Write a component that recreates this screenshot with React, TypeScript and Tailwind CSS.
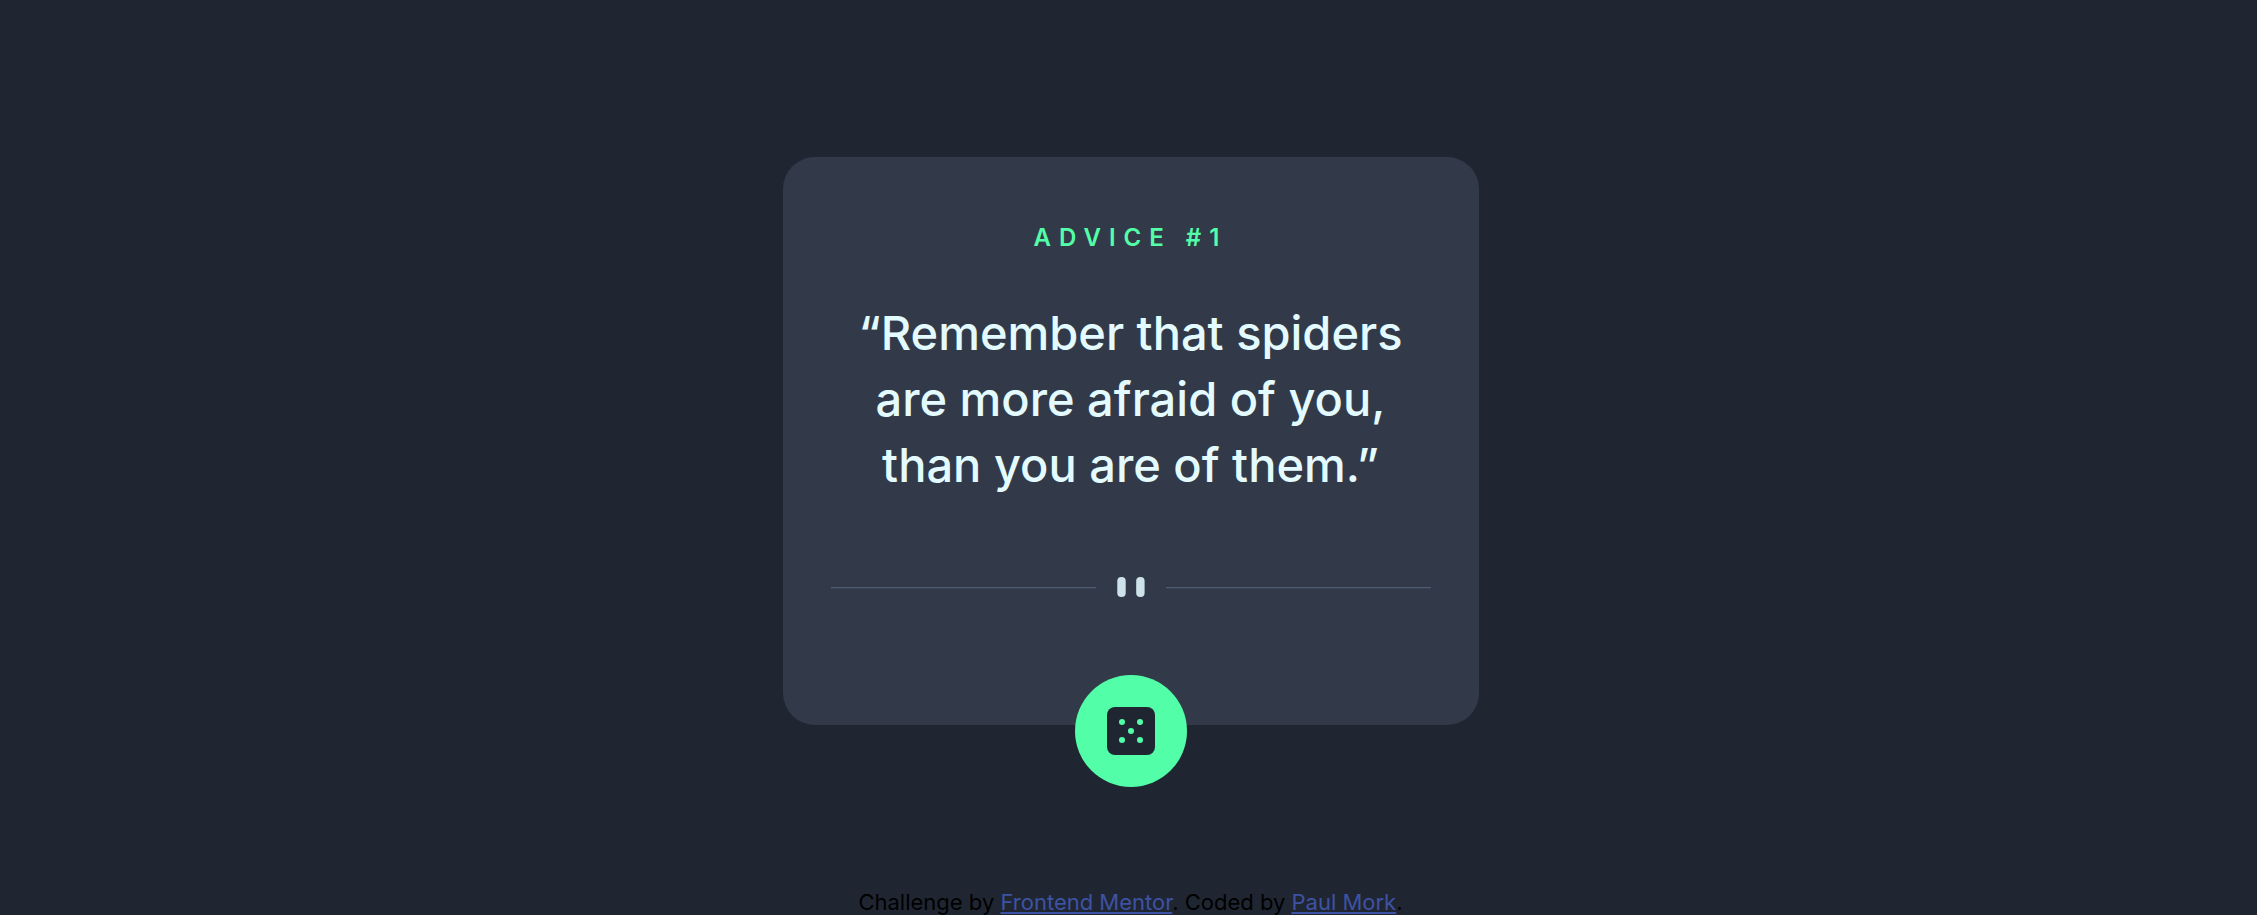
function QuoteDivider() {
  return (
    <svg className="block w-full" viewBox="0 0 600 20" aria-hidden="true">
      <path fill="#4F5D74" d="M0 10h265v1.35H0zM335 10h265v1.35H335z" />
      <g fill="#CEE3E9">
        <rect x="286.3" width="8.4" height="20" rx="4.1" />
        <rect x="305.2" width="8.4" height="20" rx="4.1" />
      </g>
    </svg>
  );
}

function DiceIcon() {
  return (
    <svg className="size-12" viewBox="0 0 24 24" aria-hidden="true">
      <rect width="24" height="24" rx="4" fill="#1f2632" />
      <g fill="#52ffa8">
        <circle cx="7.5" cy="7.5" r="1.5" />
        <circle cx="16.5" cy="7.5" r="1.5" />
        <circle cx="12" cy="12" r="1.5" />
        <circle cx="7.5" cy="16.5" r="1.5" />
        <circle cx="16.5" cy="16.5" r="1.5" />
      </g>
    </svg>
  );
}

export default function App() {
  return (
    <div className="flex min-h-screen flex-col items-center overflow-hidden bg-[#1f2632] pt-[157px] pl-1 font-['Inter',sans-serif]">
      <main className="flex w-full max-w-[696px] flex-col items-center rounded-[32px] bg-[#323a49] px-12 pt-[65px]">
        <h1 className="text-2xl leading-8 font-semibold tracking-[8px] text-[#52ffa8]">ADVICE #1</h1>
        <p className="mt-[46px] text-center text-[47px] leading-[66px] font-medium text-[#e3faff]">
          “Remember that spiders
          <br />
          are more afraid of you,
          <br />
          than you are of them.”
        </p>
        <div className="mt-[79px] w-full">
          <QuoteDivider />
        </div>
        <button
          type="button"
          aria-label="New advice"
          className="mt-[78px] -mb-[62px] flex size-28 items-center justify-center rounded-full bg-[#52ffa8]"
        >
          <DiceIcon />
        </button>
      </main>
      <footer className="mt-[165px] text-center text-[22px] leading-6 text-black">
        Challenge by{" "}
        <a className="text-[#3e52a3] underline" href="https://www.frontendmentor.io">
          Frontend Mentor
        </a>
        . Coded by{" "}
        <a className="text-[#3e52a3] underline" href="#">
          Paul Mork
        </a>
        .
      </footer>
    </div>
  );
}
